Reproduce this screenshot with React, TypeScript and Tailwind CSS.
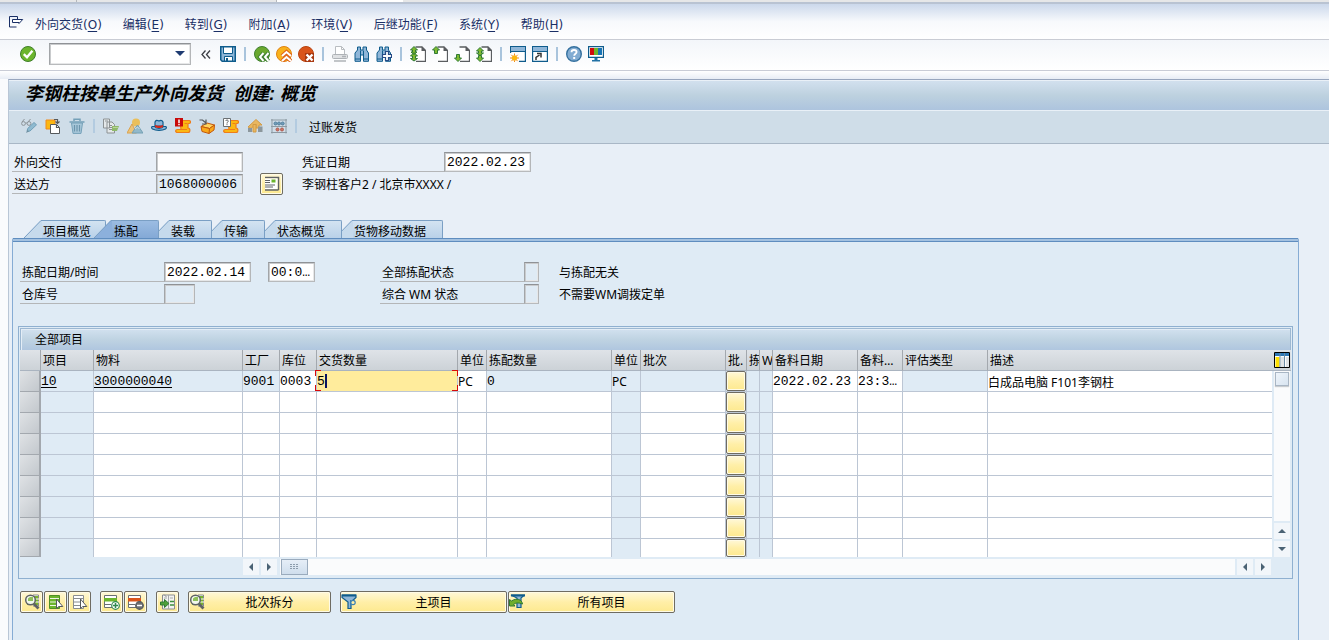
import type { ReactNode } from 'react';

const UI = "font-['Noto_Sans','Noto_Sans_CJK_SC',sans-serif]";
const MONO = "font-['Liberation_Mono','Noto_Sans_CJK_SC',monospace] text-[13px]";

function Icon({ children, className = 'size-4' }: { children: ReactNode; className?: string }) {
  return (
    <svg viewBox="0 0 16 16" fill="none" aria-hidden="true" className={`${className} block shrink-0`}>
      {children}
    </svg>
  );
}

/* ---------- system toolbar icons ---------- */

const CheckIcon = () => (
  <Icon>
    <circle cx="8" cy="8" r="7.5" fill="#6cb52c" stroke="#3f7f2a" />
    <path d="M3.8 8.2 7 11.3l5.4-6.5" stroke="#fff" strokeWidth="2.4" />
  </Icon>
);
const SaveIcon = () => (
  <Icon>
    <path d="M.75.75h14.5v14.5H2.2L.75 13.8z" fill="#8fb6d8" stroke="#0f5c8c" strokeWidth="1.5" />
    <path d="M3.5 1h9v6.5h-9z" fill="#fff" stroke="#0f5c8c" />
    <path d="M4.5 10.5h8V15h-8z" fill="#fff" stroke="#0f5c8c" />
    <path d="M6 12h2v3H6z" fill="#0f5c8c" />
  </Icon>
);
const BackIcon = () => (
  <Icon>
    <circle cx="8" cy="8" r="7.5" fill="#6aa82e" stroke="#3f8030" />
    <path d="M9.500 7 6 11l3.500 4M14.500 7 11 11l3.500 4" stroke="#3f8030" strokeWidth="4" />
    <path d="M9.500 7 6 11l3.500 4M14.500 7 11 11l3.500 4" stroke="#fff" strokeWidth="2" />
  </Icon>
);
const ExitIcon = () => (
  <Icon>
    <circle cx="8" cy="8" r="7.5" fill="#f9b21c" stroke="#e08210" />
    <path d="m6 10 4.500-4L15 10M6 15l4.500-4 4.500 4" stroke="#e0641a" strokeWidth="4" />
    <path d="m6 10 4.500-4L15 10M6 15l4.500-4 4.500 4" stroke="#fff" strokeWidth="2" />
  </Icon>
);
const CancelIcon = () => (
  <Icon>
    <circle cx="8" cy="8" r="7.5" fill="#d9541a" stroke="#b8430f" />
    <path d="M7 7h9v9H7z" fill="#a8380f" />
    <path d="m8.500 8.500 6 6m0-6-6 6" stroke="#fff" strokeWidth="2.400" />
  </Icon>
);
const PrintIcon = () => (
  <Icon>
    <path d="M3.500 8V.500h6l3 3V8" fill="#fff" stroke="#b9bdc1" />
    <path d="M9.500.500v3h3" stroke="#b9bdc1" />
    <rect x=".500" y="8.500" width="15" height="4" rx="1" fill="#dfe1e3" stroke="#aeb2b6" />
    <path d="M10 10.500h4M2 15h12" stroke="#aeb2b6" strokeWidth="1.500" />
  </Icon>
);
const Binoculars = () => (
  <>
    <path d="M3.500 1h3v3H9V1h3.500v3l2 3v8.300H9.500V9h-3v6.300H1V7l2.500-3z" fill="#8fb6d8" stroke="#0f5c8c" />
    <path d="M6.500 4.500v4.500m3-4.500V9M1 13h5.500m3 0h5" stroke="#0f5c8c" />
  </>
);
const FindIcon = () => (
  <Icon>
    <Binoculars />
  </Icon>
);
const FindNextIcon = () => (
  <Icon>
    <Binoculars />
    <path d="M9.500 5.500h3v3h3v3h-3v3h-3v-3h-3v-3h3z" fill="#fff" stroke="#264b86" strokeWidth="1.200" />
  </Icon>
);

type PageArrow = 'first' | 'prev' | 'next' | 'last';
function PageIcon({ kind }: { kind: PageArrow }) {
  const up = 'M4 .500 7.500 4H5.500v3.500h-3V4H.500z';
  const down = 'M4 15.500.500 12h2V8.500h3V12h2z';
  return (
    <Icon>
      <path d="M5.500 1H12l3.500 3.500v11H6" fill="#fff" stroke="#5a5d60" strokeWidth="1.300" />
      <path d="M11.500.500 16 5h-4.500z" fill="#5a5d60" />
      <g fill="#7fb92f" stroke="#2f7a35">
        {kind === 'first' && <path d="M4 .500 7.500 4H5.500v2H7L4 8.500 1 6h1.500V4H.500zM4 6.500l3.500 3.500h-2v2.500h2L4 15l-3.500-2.500h2V10H.500z" />}
        {kind === 'prev' && <path d={up} />}
        {kind === 'next' && <path d={down} />}
        {kind === 'last' && <path d="M4 1.500 7.500 5h-2v2h2L4 9.500.500 7h2V5H.500zM4 15.500.500 12h2V9.500h3V12h2z" />}
      </g>
    </Icon>
  );
}
const NewSessionIcon = () => (
  <Icon>
    <path d="M.6.6h14.800v14.800H.6z" fill="#fff" stroke="#0f5c8c" strokeWidth="1.200" />
    <path d="M1 1h14v4H1z" fill="#8fb6d8" />
    <path d="M0 5.500h16" stroke="#0f5c8c" />
    <path d="M0 7h9v9H0z" fill="#fff" />
    <circle cx="4.500" cy="12" r="2.700" fill="#fbb812" />
    <path d="M4.500 7.500v2m0 5V16M0 12h2m5 0h2M1.300 8.800l1.400 1.400m3.600 3.600 1.400 1.400m0-6.400-1.400 1.400m-3.600 3.600-1.400 1.400" stroke="#f28a1a" />
  </Icon>
);
const ShortcutIcon = () => (
  <Icon>
    <path d="M.6.6h14.800v14.800H.6z" fill="#fff" stroke="#0f5c8c" strokeWidth="1.200" />
    <path d="M1 1h14v4H1z" fill="#8fb6d8" />
    <path d="M0 5.500h16" stroke="#0f5c8c" />
    <path d="M4 14V11.500L7.500 9M5 7.500h4v4" stroke="#333" strokeWidth="1.500" />
  </Icon>
);
const HelpIcon = () => (
  <Icon>
    <circle cx="8" cy="8" r="7.300" fill="#82acd2" stroke="#35719f" strokeWidth="1.400" />
    <path d="M5.500 6.300C5.500 4.600 6.600 4 8 4s2.600.700 2.600 2.100C10.600 7.800 8.200 7.800 8.200 9.700" stroke="#fff" strokeWidth="1.800" />
    <path d="M7.200 11h2v2h-2z" fill="#fff" />
  </Icon>
);
const MonitorIcon = () => (
  <Icon>
    <path d="M.600.600h14.800v10.800H.600z" fill="#fff" stroke="#0f5c8c" strokeWidth="1.200" />
    <path d="M2 2h4v7H2z" fill="#d20a0a" />
    <path d="M6 2h4v7H6z" fill="#6fb52c" />
    <path d="M10 2h4v7h-4z" fill="#1673b5" />
    <path d="M6.500 12h3v2H12v1.500H4V14h2.500z" fill="#2272a5" />
  </Icon>
);

/* ---------- application toolbar icons ---------- */

const DisplayChangeIcon = () => (
  <Icon>
    <g stroke="#8d9499">
      <circle cx="2.500" cy="5.500" r="1.900" />
      <circle cx="8" cy="5.500" r="1.900" />
      <path d="M1 4 3.500 1M7 4l2.500-3M4.500 5h1.500" />
    </g>
    <path d="m6 13.500.700-3L13 4.500l2.500 2.300L9 13z" fill="#8fbad0" stroke="#6f9fb8" />
    <path d="m5 15 1.500-3 1.500 1.500z" fill="#6f8e9e" />
  </Icon>
);
const OtherDeliveryIcon = () => (
  <Icon>
    <path d="M1 2h9v9H1z" fill="#fbb812" stroke="#f28a1a" />
    <path d="M5.500 6.500h6l3 3v6h-9z" fill="#fff" stroke="#55595c" />
    <path d="M11.500 6.500v3h3M9 1.500h3.500V5m-2-1.500 2 2 2-2" stroke="#55595c" strokeWidth="1.200" />
  </Icon>
);
const TrashIcon = () => (
  <Icon>
    <path d="M.500 4h15M5 3V1.200h6V3" stroke="#74a0b8" strokeWidth="1.500" />
    <path d="M2.500 5h11l-1.500 10.400H4z" fill="#a9c8da" stroke="#74a0b8" />
    <path d="M5.500 7v6.500M8 7v6.500M10.500 7v6.500" stroke="#6b94ac" strokeWidth="1.200" />
  </Icon>
);
const DocumentFlowIcon = () => (
  <Icon>
    <path d="M.500 1h6v9h-6zM4 4h5l2.500 2.500V15H4z" fill="#e4e8e9" stroke="#8c9193" />
    <path d="M2 3h3M6 7.500h3M6 9.500h3.500M6 11.500h3" stroke="#8c9193" />
    <path d="M9 8h7l-2 5H9z" fill="#8fb96a" />
    <path d="M10 9.500h5" stroke="#b9d59a" />
  </Icon>
);
const ItemOverviewIcon = () => (
  <Icon>
    <circle cx="9" cy="4.500" r="4" fill="#eabf5a" />
    <path d="M0 15 5 6l4.500 9z" fill="#eac37a" stroke="#dca24c" />
    <path d="m5 15 5.500-8 5.500 8z" fill="#93b9ca" stroke="#74a0b4" />
    <path d="m8 11 2.500-2 2 2" stroke="#d2e2e9" />
  </Icon>
);
const HatIcon = () => (
  <Icon>
    <path d="M4 8V4c1-2 2-2 4-1 2-1 3-1 4 1v4z" fill="#8fb6d8" stroke="#0f5c8c" strokeWidth="1.200" />
    <path d="M3.500 8.500H1.200C.300 9 .500 10.500 1.500 11c3.500 1.800 9.500 1.800 13 0 1-.500 1.200-2 .300-2.500h-2.300C11 11 5 11 3.500 8.500z" fill="#8fb6d8" stroke="#0f5c8c" strokeWidth="1.200" />
    <path d="M4 7c2 1 6 1 8 0v2c-2 1.300-6 1.300-8 0z" fill="#d2281a" />
  </Icon>
);
const scroll = 'M5 2.500h9c2 0 2 3 0 3h-1v4.500c2.500 0 2.500 4.500 0 4.500H2.500c-2.500 0-2.500-3 0-3H6z';
const IncompletionIcon = () => (
  <Icon>
    <path d={scroll} fill="#fbb812" stroke="#ee7d1a" strokeWidth="1.200" />
    <path d="M12 5.500H9.500M5 11.500h7" stroke="#ee7d1a" />
    <path d="M0 0h8v8.500H0z" fill="#c80a0a" />
    <path d="M4 1.500v3.700M4 6v1.300" stroke="#fff" strokeWidth="1.500" />
  </Icon>
);
const PackIcon = () => (
  <Icon>
    <path d="m2 8.500 6-3.500 7.500 2-5 3.500z" fill="#ffd35b" stroke="#c2570c" />
    <path d="m2 8.500 1 5 7 2 5-3.500.500-5-5 3.500z" fill="#f9a91a" stroke="#c2570c" />
    <path d="m10.500 10.500-.500 5" stroke="#c2570c" />
    <path d="M.500 2h3L7 5M7 1.500V6H3" stroke="#55595c" strokeWidth="1.200" />
  </Icon>
);
const OutputIcon = () => (
  <Icon>
    <path d={scroll} fill="#fbb812" stroke="#ee7d1a" strokeWidth="1.200" />
    <path d="M12 5.500H9.500M5 11.500h7" stroke="#ee7d1a" />
    <path d="M.500.500h7v8h-7z" fill="#fff" stroke="#6b7073" />
    <path d="M2.700 3c.300-1.400 2.600-1.200 2.500.100C5.200 4 4 4.200 4 5.500m0 .700v1" stroke="#55595c" />
  </Icon>
);
const LoadIcon = () => (
  <Icon>
    <path d="m1 9 8-7.500L15 7h-3v3H9V6L4 10.500z" fill="#e9b75f" stroke="#d29a45" />
    <path d="M6 6.500h3V14H6z" fill="#e9b75f" stroke="#d29a45" />
    <path d="M1 10h4v4H1zM11 8.500h4.500V14H11z" fill="#8c979c" />
  </Icon>
);
const AbacusIcon = () => (
  <Icon>
    <path d="M1 1v14.500M15 1v14.500M0 2h16M0 8.500h16M0 14.500h16" stroke="#8d9aa3" />
    <g fill="#6f9dba" stroke="#547f9c">
      <circle cx="4.500" cy="5.500" r="1.500" />
      <circle cx="8" cy="5.500" r="1.500" />
      <circle cx="11.700" cy="5.500" r="1.500" />
    </g>
    <g fill="#cb7464" stroke="#b15c50">
      <circle cx="6.500" cy="11.500" r="1.500" />
      <circle cx="11" cy="11.500" r="1.500" />
    </g>
  </Icon>
);

/* ---------- table control icons ---------- */

const AddressIcon = () => (
  <Icon>
    <path d="M1 1.500h13.500v12.500" stroke="#5f6265" strokeWidth="1.500" />
    <path d="M1 2.500h12.500v11H1z" fill="#fff" />
    <path d="M14.500 14H1" stroke="#5f6265" strokeWidth="1.500" />
    <path d="M7.500 3.500h4v3h-4z" fill="#6cb52c" />
    <path d="M1 4.500h5M1 6.500h5M1 9h10M1 11h8" stroke="#5f6265" />
  </Icon>
);
const DetailIcon = () => (
  <Icon>
    <path d="M9 1h5.500v11H9" fill="#fff" stroke="#85898c" />
    <path d="M3 2h11v9H3z" fill="#7ab52c" />
    <path d="M11 5h4M11 8h4" stroke="#fff" />
    <circle cx="6.500" cy="6" r="4.800" fill="#f2f8ec" stroke="#5f6265" strokeWidth="1.500" />
    <path d="M4 7V4.500l2-1.500h3v4z" fill="#8fc05a" />
    <path d="m10 10 4.500 4.500" stroke="#5f6265" strokeWidth="2.800" />
  </Icon>
);
function SelectIcon({ filled }: { filled: boolean }) {
  return (
    <Icon>
      <path d="M1.500 1.500h10v13h-10z" fill={filled ? '#6cb52c' : '#fff'} stroke={filled ? '#4f8f25' : '#8a8d90'} />
      <path d="M2 4.500h9M2 8h9M2 11.500h9" stroke={filled ? '#eef7e4' : '#8a8d90'} />
      <path d="M8.500 5v9.500l2.300-2h4z" fill="#fff" stroke="#55595c" />
    </Icon>
  );
}
function RowIcon({ kind }: { kind: 'insert' | 'delete' }) {
  const add = kind === 'insert';
  return (
    <Icon>
      <path d="M.500 1.500h12v12H.500z" fill="#fff" stroke="#6b6e71" />
      <path d="M0 4h13v3.500H0z" fill={add ? '#6cb52c' : '#d9541a'} />
      <path d="M1 10.500h6" stroke="#6b6e71" />
      <circle cx="11.500" cy="11.500" r="3.800" fill={add ? '#fff' : '#6b6e71'} stroke={add ? '#2f8a4f' : '#55595c'} strokeWidth="1.200" />
      {add ? <path d="M11.500 9v5M9 11.500h5" stroke="#2f8a4f" strokeWidth="1.500" /> : <path d="M9 11.500h5" stroke="#fff" strokeWidth="1.500" />}
    </Icon>
  );
}
const ConfigureIcon = () => (
  <Icon>
    <path d="M2.500 1h12v14h-12z" fill="#f4f4f2" stroke="#8a8d90" />
    <path d="M8.500 1v14M4 4h3M10 4h3" stroke="#a6a9ab" />
    <path d="M4 .500 6.500 3" stroke="#8a8d90" />
    <path d="M10 7.500h4M10 11h4" stroke="#3b8f3b" strokeWidth="1.500" />
    <path d="M.500 8h4V5.500l4.500 4-4.500 4V11h-4z" fill="#4fa03a" stroke="#2f7a35" />
  </Icon>
);
const funnel = 'M1 1h14v2.500L10 8v6.500H7V8L1 3.500z';
const FilterIcon = () => (
  <Icon>
    <path d={funnel} fill="#8fb6d8" stroke="#0f5c8c" strokeWidth="1.200" />
    <path d="M1 1.500h14" stroke="#0f5c8c" strokeWidth="2" />
    <circle cx="12" cy="8.500" r="2.200" fill="#ffefa6" stroke="#3b7fb2" strokeWidth="1.200" />
    <path d="M9.500 6v8" stroke="#3b7fb2" />
  </Icon>
);
const ClearFilterIcon = () => (
  <Icon>
    <path d="M2 1h13.500L12 4v9.500H8V4z" fill="#8fb6d8" stroke="#0f5c8c" strokeWidth="1.200" />
    <path d="M2 1.500h14" stroke="#0f5c8c" strokeWidth="2" />
    <path d="M.500 5.500V12H6L4.500 10.500c2.500-2 5-2 9-.500-.500-4.500-6-6.500-11-3z" fill="#6fae2c" stroke="#2f7a35" />
  </Icon>
);

/* ---------- building blocks ---------- */

function IconButton({ label, children }: { label: string; children: ReactNode }) {
  return (
    <button type="button" aria-label={label} className="flex shrink-0 items-center justify-center">
      {children}
    </button>
  );
}

const Separator = () => <span className="mx-0.5 h-3.5 w-0.5 shrink-0 bg-[#a9c4dc]" />;

interface FieldProps {
  id: string;
  label: string;
  value?: string;
  width: string;
  readOnly?: boolean;
}

function Field({ id, label, value = '', width, readOnly = false }: FieldProps) {
  return (
    <div className="flex h-5 shrink-0">
      <label htmlFor={id} className="h-5 w-36 border-b border-[#b4b6b8] pl-0.5 leading-[22px]">
        {label}
      </label>
      <TextBox id={id} value={value} width={width} readOnly={readOnly} />
    </div>
  );
}

const SUNKEN = 'border border-t-[#8f9296] border-r-[#b4b6b8] border-b-[#b8babc] border-l-[#a2a5a8] shadow-[inset_1px_1px_0_#c9cbcd,inset_-1px_-1px_0_#e6e7e8]';

function TextBox({ id, value, width, readOnly, label }: { id: string; value: string; width: string; readOnly: boolean; label?: string }) {
  return (
    <input
      id={id}
      aria-label={label}
      defaultValue={value}
      readOnly={readOnly}
      className={`h-5 ${width} ${MONO} ${readOnly ? 'bg-[#dfebf5]' : 'bg-white'} ${SUNKEN} pl-0.5 outline-none`}
    />
  );
}

const YELLOW = 'border border-[#6f6c62] rounded-[2px] bg-linear-to-b from-[#fff8d8] via-[#ffefa8] to-[#fde98f] shadow-[inset_0_0_0_1px_#fffbe6]';

function SquareButton({ label, children }: { label: string; children: ReactNode }) {
  return (
    <button type="button" aria-label={label} className={`flex h-[22px] w-[23px] shrink-0 items-center justify-center ${YELLOW}`}>
      {children}
    </button>
  );
}

function WideButton({ text, icon, width }: { text: string; icon: ReactNode; width: string }) {
  return (
    <button type="button" className={`flex h-[22px] items-center ${width} ${YELLOW}`}>
      {icon}
      <span className="flex-1 pt-0.5 pl-1 text-center">{text}</span>
    </button>
  );
}

type Direction = 'left' | 'right' | 'up' | 'down';
const arrowPaths: Record<Direction, string> = {
  left: 'M10 4v8L6 8z',
  right: 'M6 4v8l4-4z',
  up: 'M4 10h8L8 6z',
  down: 'M4 6h8l-4 4z',
};

function ScrollArrow({ direction }: { direction: Direction }) {
  return (
    <button type="button" aria-label={`Scroll ${direction}`} className="flex h-4 w-4 shrink-0 items-center justify-center bg-[#f2f6fa]">
      <Icon>
        <path d={arrowPaths[direction]} fill="#4a6274" />
      </Icon>
    </button>
  );
}

interface TabProps {
  text: string;
  active?: boolean;
  className: string;
}

function Tab({ text, active = false, className }: TabProps) {
  return (
    <button type="button" role="tab" aria-selected={active} className={`relative flex h-[18px] ${className}`}>
      <svg viewBox="0 0 18 18" className="block h-[18px] w-[18px] shrink-0" fill="none" aria-hidden="true">
        <path d="M0 18 17 0h1v18z" fill={active ? '#8cb0dc' : '#c6daec'} />
        <path d="M0 18 17 .500h1" stroke="#7a9fc4" />
      </svg>
      <span
        className={`block h-[18px] flex-1 rounded-tr-[2px] border-t border-r border-[#7a9fc4] pt-px text-left leading-5 ${
          active ? 'bg-linear-to-b from-[#9bbce2] to-[#84a9d6] pl-0.5' : 'bg-linear-to-b from-[#d3e3f1] to-[#b9d1e9] pl-px'
        }`}
      >
        {text}
      </span>
    </button>
  );
}

/* ---------- data ---------- */

const menus = [
  ['外向交货', 'O'],
  ['编辑', 'E'],
  ['转到', 'G'],
  ['附加', 'A'],
  ['环境', 'V'],
  ['后继功能', 'F'],
  ['系统', 'Y'],
  ['帮助', 'H'],
];

type CellKind = 'text' | 'link' | 'input' | 'active' | 'button';

interface Column {
  title: string;
  width: string;
  kind: CellKind;
  value: string;
  mono?: boolean;
  locked?: boolean;
}

const columns: Column[] = [
  { title: '项目', width: 'w-[53px]', kind: 'link', value: '10', mono: true, locked: true },
  { title: '物料', width: 'w-[149px]', kind: 'link', value: '3000000040', mono: true },
  { title: '工厂', width: 'w-[37px]', kind: 'text', value: '9001', mono: true },
  { title: '库位', width: 'w-[37px]', kind: 'input', value: '0003', mono: true },
  { title: '交货数量', width: 'w-[141px]', kind: 'active', value: '5', mono: true },
  { title: '单位', width: 'w-[29px]', kind: 'input', value: 'PC' },
  { title: '拣配数量', width: 'w-[125px]', kind: 'text', value: '0', mono: true },
  { title: '单位', width: 'w-[29px]', kind: 'text', value: 'PC', locked: true },
  { title: '批次', width: 'w-[85px]', kind: 'text', value: '' },
  { title: '批.', width: 'w-[21px]', kind: 'button', value: '', locked: true },
  { title: '拣', width: 'w-[13px]', kind: 'text', value: '', locked: true },
  { title: 'W', width: 'w-[13px]', kind: 'text', value: '', locked: true },
  { title: '备料日期', width: 'w-[85px]', kind: 'input', value: '2022.02.23', mono: true },
  { title: '备料…', width: 'w-[45px]', kind: 'input', value: '23:3…', mono: true },
  { title: '评估类型', width: 'w-[85px]', kind: 'text', value: '' },
  { title: '描述', width: '', kind: 'input', value: '白成品电脑 F101李钢柱' },
];

const emptyRows = [2, 3, 4, 5, 6, 7, 8, 9];

function CellContent({ column, first, last }: { column: Column; first: boolean; last: boolean }) {
  if (column.kind === 'button') {
    return <button type="button" aria-label="批次拆分" className={`block w-5 ${last ? 'h-[18px]' : 'h-5'} ${YELLOW}`} />;
  }
  if (!first) return null;
  const font = column.mono ? MONO : '';
  if (column.kind === 'link') {
    return (
      <a href="#item" className={`block leading-[22px] underline underline-offset-2 ${font}`}>
        {column.value}
      </a>
    );
  }
  if (column.kind === 'input' || column.kind === 'active') {
    return (
      <input aria-label={column.title} defaultValue={column.value} className={`block h-5 w-full bg-transparent pt-px outline-none ${font}`} />
    );
  }
  return <span className={`block leading-[22px] ${font}`}>{column.value}</span>;
}

function cellBackground(column: Column, first: boolean) {
  if (first) {
    if (column.kind === 'active') return 'bg-[#ffec9c]';
    return column.kind === 'input' ? 'bg-white' : 'bg-[#dfebf5]';
  }
  return column.locked ? 'bg-[#dfebf5]' : 'bg-white';
}

function ItemRow({ number }: { number: number }) {
  const first = number === 1;
  const last = number === 9;
  const line = last ? '' : 'border-b';
  return (
    <tr className={last ? 'h-[18px]' : 'h-[21px]'}>
      <td className="p-0">
        <button
          type="button"
          aria-label={`选择行 ${number}`}
          className={`block w-[21px] border-r-2 border-b border-[#a3a8ae] bg-linear-to-br from-[#dfe2e5] to-[#c3c8cd] ${last ? 'h-[18px]' : 'h-[21px]'}`}
        />
      </td>
      {columns.map((column, i) => (
        <td
          key={i}
          className={`relative p-0 whitespace-nowrap border-[#bcc6d4] ${line} ${i === columns.length - 1 ? '' : 'border-r'} ${cellBackground(column, first)}`}
        >
          <div className={last ? 'h-[18px]' : 'h-5'}>
            <CellContent column={column} first={first} last={last} />
          </div>
          {first && column.kind === 'active' && (
            <>
              <span className="absolute top-[3px] left-2 h-3.5 w-0.5 bg-[#0a1460]" />
              <span className="absolute -top-px -left-0.5 h-1.5 w-1.5 border-t border-l border-[#d80a0a]" />
              <span className="absolute -top-px -right-px h-1.5 w-1.5 border-t border-r border-[#d80a0a]" />
              <span className="absolute bottom-0 -left-0.5 h-1.5 w-1.5 border-b border-l border-[#d80a0a]" />
              <span className="absolute -right-px bottom-0 h-1.5 w-1.5 border-r border-b border-[#d80a0a]" />
            </>
          )}
        </td>
      ))}
    </tr>
  );
}

const HEAD = 'h-[21px] border-b border-[#aab4c0] bg-linear-to-b from-[#dfe3e8] to-[#ccd2d7]';

function ItemTable() {
  return (
    <section className="mx-[5px] mt-[22px] border border-[#8fb0d0] p-px">
      <h2 className="h-[22px] border border-b-0 border-[#9db8d2] bg-linear-to-b from-[#d2e1ef] via-[#bfd3e2] to-[#afc6df] pl-3.5 leading-[21px] shadow-[inset_1px_1px_0_#e3edf6]">
        全部项目
      </h2>
      <div className="flex">
        <div className="min-w-0 flex-1">
          <table className="w-full table-fixed border-separate border-spacing-0 text-left">
            <thead>
              <tr>
                <th aria-label="选择" className={`w-[21px] border-r border-r-[#a3a8ae] p-0 ${HEAD}`} />
                {columns.map((column, i) => (
                  <th
                    key={i}
                    className={`overflow-hidden p-0 pl-0.5 font-normal whitespace-nowrap ${HEAD} ${column.width} ${
                      i === columns.length - 1 ? '' : 'border-r border-r-[#a3a8ae]'
                    }`}
                  >
                    <span className="block h-5 overflow-hidden leading-[22px]">{column.title}</span>
                  </th>
                ))}
              </tr>
            </thead>
            <tbody>
              <ItemRow number={1} />
              {emptyRows.map((n) => (
                <ItemRow key={n} number={n} />
              ))}
            </tbody>
          </table>
        </div>
        <div className="flex w-[19px] shrink-0 flex-col items-center">
          <div className={`flex w-full items-center justify-center ${HEAD}`}>
            <button type="button" aria-label="配置" className="block h-4 w-4">
              <Icon>
                <path d="M.500.500h15v15H.500z" fill="#fff" stroke="#000" />
                <path d="M1 1h14v3H1z" fill="#2f78b5" />
                <path d="M1.500 5h4v10h-4z" fill="#ffe000" />
                <path d="M7 5h3v10H7zM12 5h3v10h-3z" fill="#e0e3e6" />
                <path d="M6 1v14M10.500 1v14" stroke="#6d8ba3" />
              </Icon>
            </button>
          </div>
          <div className="flex w-4 flex-1 flex-col bg-[#fafbfc]">
            <span className="mt-px ml-px h-3.5 w-3.5 border border-[#a9b6c4] bg-linear-to-br from-[#eef4fa] to-[#d8e4f0] shadow-[0_1px_1px_#c8ccd0]" />
          </div>
          <div className="flex flex-col gap-0.5 bg-[#dfebf5] pt-0.5">
            <ScrollArrow direction="up" />
            <ScrollArrow direction="down" />
          </div>
        </div>
      </div>
      <div className="mt-0.5 mr-5 ml-[223px] flex h-[18px] items-start gap-0.5">
        <ScrollArrow direction="left" />
        <ScrollArrow direction="right" />
        <div className="ml-px flex h-4 flex-1 bg-[#fafbfc] pl-px">
          <span className="flex h-4 w-[27px] items-center justify-center border border-[#9aabbd] bg-linear-to-b from-[#e6eef7] to-[#cfdeed]">
            <svg viewBox="0 0 9 6" className="h-1.5 w-[9px]" fill="#8c9cac" aria-hidden="true">
              <path d="M0 0h2v1H0zM3 0h2v1H3zM6 0h2v1H6zM0 2h2v1H0zM3 2h2v1H3zM6 2h2v1H6zM0 4h2v1H0zM3 4h2v1H3zM6 4h2v1H6z" />
            </svg>
          </span>
        </div>
        <ScrollArrow direction="left" />
        <ScrollArrow direction="right" />
      </div>
    </section>
  );
}

export default function App() {
  return (
    <div className={`flex min-h-screen flex-col bg-[#fafbfd] text-[12px] text-black ${UI}`}>
      <div className="flex h-1 shrink-0 border-b-2 border-[#b9c3d2] bg-[#e6e7e8]">
        <span className="w-[77px] border-r border-[#b5b8bb]" />
        <span className="w-[200px] border-r border-[#b5b8bb]" />
        <span className="w-[126px] bg-white" />
      </div>

      <nav className="flex h-9 shrink-0 items-center gap-[21px] border-b border-[#c9ccd4] bg-linear-to-b from-[#cbd8eb] via-[#f7f9fc] to-white pt-1.5 pl-2 text-[#1a2f66]">
        <button type="button" aria-label="菜单" className="-mt-1.5 -mr-2.5">
          <Icon>
            <path d="M8.500 13H1.500V2.500h8V5" stroke="#1a2f66" />
            <path d="M4.500 5.500h10.200L11 9.500v-1H4.500z" fill="#fff" stroke="#1a2f66" />
          </Icon>
        </button>
        {menus.map(([text, key]) => (
          <button key={key} type="button" className="leading-4 whitespace-nowrap font-['DejaVu_Sans','Noto_Sans_CJK_SC',sans-serif]">
            {text}(<span className="underline underline-offset-2">{key}</span>)
          </button>
        ))}
      </nav>

      <div className="flex h-[31px] shrink-0 items-center gap-1.5 border-b border-[#c9ccd6] bg-linear-to-b from-[#f3f6fa] to-white pb-0.5 pl-5">
        <IconButton label="回车">
          <CheckIcon />
        </IconButton>
        <div className="relative ml-[7px] h-[22px] w-[142px]">
          <input aria-label="命令" className={`block h-[22px] w-full bg-white px-1 outline-none ${SUNKEN}`} />
          <svg viewBox="0 0 10 5" className="absolute top-2 right-1.5 h-[5px] w-2.5" fill="#1f3c72" aria-hidden="true">
            <path d="M0 0h10L5 5z" />
          </svg>
        </div>
        <button type="button" aria-label="隐藏" className="mr-[3px] ml-1 block h-4 w-2.5">
          <svg viewBox="0 0 10 16" className="h-4 w-2.5" fill="none" stroke="#3c3f45" strokeWidth="1.300" aria-hidden="true">
            <path d="m4.500 4.500-3.500 4 3.500 4M9 4.500l-3.500 4 3.500 4" />
          </svg>
        </button>
        <IconButton label="保存"><SaveIcon /></IconButton>
        <Separator />
        <IconButton label="返回"><BackIcon /></IconButton>
        <IconButton label="退出"><ExitIcon /></IconButton>
        <IconButton label="取消"><CancelIcon /></IconButton>
        <Separator />
        <IconButton label="打印"><PrintIcon /></IconButton>
        <IconButton label="查找"><FindIcon /></IconButton>
        <IconButton label="继续查找"><FindNextIcon /></IconButton>
        <Separator />
        <IconButton label="首页"><PageIcon kind="first" /></IconButton>
        <IconButton label="上一页"><PageIcon kind="prev" /></IconButton>
        <IconButton label="下一页"><PageIcon kind="next" /></IconButton>
        <IconButton label="末页"><PageIcon kind="last" /></IconButton>
        <Separator />
        <IconButton label="新建会话"><NewSessionIcon /></IconButton>
        <IconButton label="创建快捷方式"><ShortcutIcon /></IconButton>
        <Separator />
        <IconButton label="帮助"><HelpIcon /></IconButton>
        <IconButton label="定制本地布局"><MonitorIcon /></IconButton>
      </div>

      <div className="h-2 shrink-0 bg-linear-to-b from-white to-[#e8edf5]" />

      <main className="ml-2 flex flex-1 flex-col border-t border-l border-t-[#98a6be] border-l-[#b9c6d6] bg-[#e8eff7]">
        <h1 className="h-[31px] border-t border-b border-[#e9f0f7] bg-linear-to-b from-[#d2e0ee] via-[#bdd1df] to-[#adc4de] pl-4 font-['Liberation_Sans','Noto_Sans_CJK_SC',sans-serif] text-[18px] leading-[27px] font-bold italic">
          李钢柱按单生产外向发货&nbsp; 创建: 概览
        </h1>
        <div className="flex h-[33px] shrink-0 items-center gap-2 border-b border-[#a9b7c6] bg-[#cfdde8] pb-0.5 pl-3">
          <IconButton label="显示/更改"><DisplayChangeIcon /></IconButton>
          <IconButton label="其他交货"><OtherDeliveryIcon /></IconButton>
          <IconButton label="删除"><TrashIcon /></IconButton>
          <span className="h-3.5 w-0.5 bg-[#b3cbe0]" />
          <IconButton label="凭证流"><DocumentFlowIcon /></IconButton>
          <IconButton label="概览"><ItemOverviewIcon /></IconButton>
          <IconButton label="抬头明细"><HatIcon /></IconButton>
          <IconButton label="未完成日志"><IncompletionIcon /></IconButton>
          <IconButton label="包装"><PackIcon /></IconButton>
          <IconButton label="输出"><OutputIcon /></IconButton>
          <IconButton label="装载"><LoadIcon /></IconButton>
          <IconButton label="数量"><AbacusIcon /></IconButton>
          <span className="h-3.5 w-0.5 bg-[#b3cbe0]" />
          <button type="button" className="ml-1 pt-1 leading-4">过账发货</button>
        </div>

        <div className="flex flex-col gap-0.5 pt-2 pl-[3px]">
          <div className="flex h-5 gap-[57px]">
            <Field id="delivery" label="外向交付" width="w-[87px]" />
            <Field id="docdate" label="凭证日期" value="2022.02.23" width="w-[87px]" />
          </div>
          <div className="flex h-5 items-center">
            <Field id="shipto" label="送达方" value="1068000006" width="w-[87px]" readOnly />
            <div className="mr-[19px] ml-[17px]">
              <SquareButton label="地址"><AddressIcon /></SquareButton>
            </div>
            <span className="pt-0.5 leading-5">李钢柱客户2 / 北京市XXXX /</span>
          </div>
        </div>

        <div role="tablist" className="isolate mt-[26px] ml-[15px] flex">
          <Tab text="项目概览" className="w-[82px]" />
          <Tab text="拣配" active className="z-50 -ml-3 w-[65px]" />
          <Tab text="装载" className="z-40 -ml-[7px] w-[60px]" />
          <Tab text="传输" className="z-30 -ml-[7px] w-[60px]" />
          <Tab text="状态概览" className="z-20 -ml-[7px] w-[84px]" />
          <Tab text="货物移动数据" className="z-10 -ml-[7px] w-[108px]" />
        </div>

        <div className="mr-[30px] ml-[3px] flex-1 rounded-t-[2px] border-x border-[#86acd4] bg-[#dfebf5]">
          <div className="h-1 border-y border-[#5f8dbf] bg-[#a3c1e0]" />
          <div className="mt-5 flex flex-col gap-0.5 pl-[7px]">
            <div className="flex h-5">
              <Field id="pickdate" label="拣配日期/时间" value="2022.02.14" width="w-[87px]" />
              <div className="mr-[65px] ml-[17px] flex">
                <TextBox id="picktime" label="拣配时间" value="00:0…" width="w-[47px]" readOnly={false} />
              </div>
              <Field id="pickstatus" label="全部拣配状态" width="w-[15px]" readOnly />
              <span className="ml-5 leading-[22px]">与拣配无关</span>
            </div>
            <div className="flex h-5">
              <div className="w-[360px]">
                <Field id="warehouse" label="仓库号" width="w-[31px]" readOnly />
              </div>
              <Field id="wmstatus" label="综合 WM 状态" width="w-[15px]" readOnly />
              <span className="ml-5 leading-[22px]">不需要WM调拨定单</span>
            </div>
          </div>

          <ItemTable />

          <div className="mt-3 ml-[7px] flex gap-[9px]">
            <div className="flex gap-px">
              <SquareButton label="明细"><DetailIcon /></SquareButton>
              <SquareButton label="全选"><SelectIcon filled /></SquareButton>
              <SquareButton label="取消全选"><SelectIcon filled={false} /></SquareButton>
            </div>
            <div className="flex gap-px">
              <SquareButton label="插入行"><RowIcon kind="insert" /></SquareButton>
              <SquareButton label="删除行"><RowIcon kind="delete" /></SquareButton>
            </div>
            <SquareButton label="配置项目"><ConfigureIcon /></SquareButton>
            <WideButton text="批次拆分" icon={<DetailIcon />} width="w-[143px]" />
            <div className="flex gap-px">
              <WideButton text="主项目" icon={<FilterIcon />} width="w-[167px]" />
              <WideButton text="所有项目" icon={<ClearFilterIcon />} width="w-[167px]" />
            </div>
          </div>
        </div>
      </main>
    </div>
  );
}
